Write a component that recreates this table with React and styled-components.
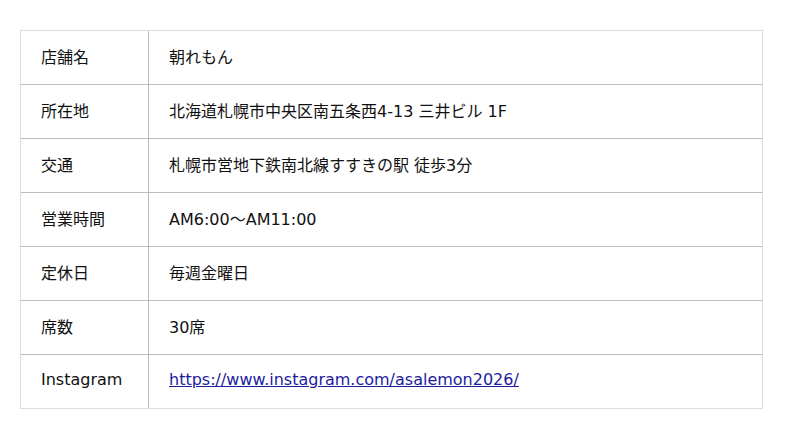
import React from "react";
import styled, { createGlobalStyle } from "styled-components";

const Global = createGlobalStyle`
  html, body { margin: 0; padding: 0; background: #fff; }
  body { font-family: "DejaVu Sans", "Noto Sans CJK JP", sans-serif; color: #111; }
`;

const Page = styled.div`
  padding: 30px 38px 30px 20px;
`;

const Table = styled.div`
  width: 741px;
  border: 1px solid #dcdcdc;
  display: grid;
  grid-template-columns: 128px 1fr;
`;

const Cell = styled.div`
  height: 49px;
  box-sizing: content-box;
  display: flex;
  align-items: center;
  padding: 0 0 4px 20px;
  font-size: 16px;
  border-top: ${(p) => (p.$first ? "none" : "1px solid #bcbcbc")};
`;

const Label = styled(Cell)`
  border-right: 1px solid #bcbcbc;
`;

const Value = styled(Cell)``;

const Link = styled.a`
  color: #1c1c9e;
  text-decoration: underline;
`;

const rows = [
  ["店舗名", "朝れもん"],
  ["所在地", "北海道札幌市中央区南五条西4-13 三井ビル 1F"],
  ["交通", "札幌市営地下鉄南北線すすきの駅 徒歩3分"],
  ["営業時間", "AM6:00〜AM11:00"],
  ["定休日", "毎週金曜日"],
  ["席数", "30席"],
];

export default function App() {
  return (
    <>
      <Global />
      <Page>
        <Table>
          {rows.map(([k, v], i) => (
            <React.Fragment key={k}>
              <Label $first={i === 0}>{k}</Label>
              <Value $first={i === 0}>{v}</Value>
            </React.Fragment>
          ))}
          <Label>Instagram</Label>
          <Value>
            <Link href="#">https://www.instagram.com/asalemon2026/</Link>
          </Value>
        </Table>
      </Page>
    </>
  );
}
